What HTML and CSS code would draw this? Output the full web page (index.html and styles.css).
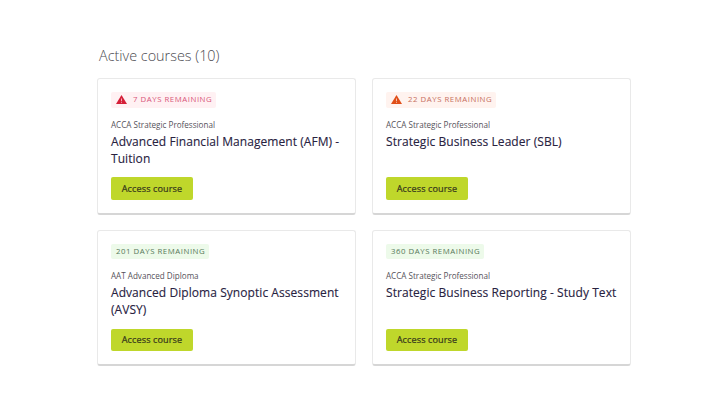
FILE: index.html
```html
<!DOCTYPE html>
<html lang="en">
<head>
<meta charset="utf-8">
<title>Active courses</title>
<link rel="stylesheet" href="styles.css">
</head>
<body>
<main class="page">
  <h1 class="heading">Active courses (10)</h1>
  <section class="grid">
    <article class="card">
      <div class="badge badge-red"><svg class="warn" viewBox="0 0 22 18"><path fill="currentColor" d="M11 0 22 18H0Z"/><path fill="#fff" fill-opacity=".65" d="M10 7h2v5h-2ZM10 13.5h2v2h-2Z"/></svg><span class="badge-text">7 DAYS REMAINING</span></div>
      <p class="level">ACCA Strategic Professional</p>
      <h2 class="title">Advanced Financial Management (AFM) -<br>Tuition</h2>
      <button class="button">Access course</button>
    </article>
    <article class="card">
      <div class="badge badge-orange"><svg class="warn" viewBox="0 0 22 18"><path fill="currentColor" d="M11 0 22 18H0Z"/><path fill="#fff" fill-opacity=".65" d="M10 7h2v5h-2ZM10 13.5h2v2h-2Z"/></svg><span class="badge-text">22 DAYS REMAINING</span></div>
      <p class="level">ACCA Strategic Professional</p>
      <h2 class="title">Strategic Business Leader (SBL)</h2>
      <button class="button">Access course</button>
    </article>
    <article class="card">
      <div class="badge badge-green"><span class="badge-text">201 DAYS REMAINING</span></div>
      <p class="level">AAT Advanced Diploma</p>
      <h2 class="title">Advanced Diploma Synoptic Assessment<br>(AVSY)</h2>
      <button class="button">Access course</button>
    </article>
    <article class="card">
      <div class="badge badge-green"><span class="badge-text">360 DAYS REMAINING</span></div>
      <p class="level">ACCA Strategic Professional</p>
      <h2 class="title">Strategic Business Reporting - Study Text</h2>
      <button class="button">Access course</button>
    </article>
  </section>
</main>
</body>
</html>
```
FILE: styles.css
```css
* { box-sizing: border-box; }
body { margin: 0; background: #fff; font-family: "Open Sans", sans-serif; color: #28223f; }
.page { width: 534px; margin: 0 0 0 97px; padding-top: 46px; }
.heading { margin: 0 0 12px 2px; font-size: 14.4px; line-height: 20px; font-weight: 300; color: #4a4a50; }
.grid { display: grid; grid-template-columns: 259px 259px; grid-auto-rows: 136.5px; gap: 15px 16px; }
.card { display: flex; flex-direction: column; align-items: flex-start; padding: 13px; border: 1px solid #e9e9e9; border-bottom: 2px solid #d6d6d6; border-radius: 3px; }
.badge { display: flex; align-items: center; height: 16px; padding: 0 4px 0 5px; border-radius: 2px; font-size: 7.8px; line-height: 14px; letter-spacing: 0.54px; white-space: nowrap; }
.badge-text { margin-top: -2px; }
.badge-red { background: #fff1f3; color: #d51f38; }
.badge-red .badge-text { color: #d8577a; }
.badge-orange { background: #fff3ef; color: #e04e18; }
.badge-orange .badge-text { color: #c66f60; }
.badge-green { background: #edfaea; color: #56795a; }
.badge-green .badge-text { margin-top: 0; }
.warn { width: 11px; height: 9px; margin-right: 6px; }
.level { margin: 10.8px 0 0; font-size: 8.1px; line-height: 12px; color: #55525a; }
.title { margin: 3.2px 0 0; height: 34px; font-size: 12px; letter-spacing: 0.06px; line-height: 16.8px; font-weight: 500; -webkit-text-stroke: 0.12px; white-space: nowrap; }
.button { margin: 9.8px 0 0; width: 82px; height: 22.5px; padding: 0; border: 0; border-radius: 2px; background: #bfd72b; font: 500 9.1px "Open Sans", sans-serif; letter-spacing: 0.1px; -webkit-text-stroke: 0.2px; color: #34351c; }
```
